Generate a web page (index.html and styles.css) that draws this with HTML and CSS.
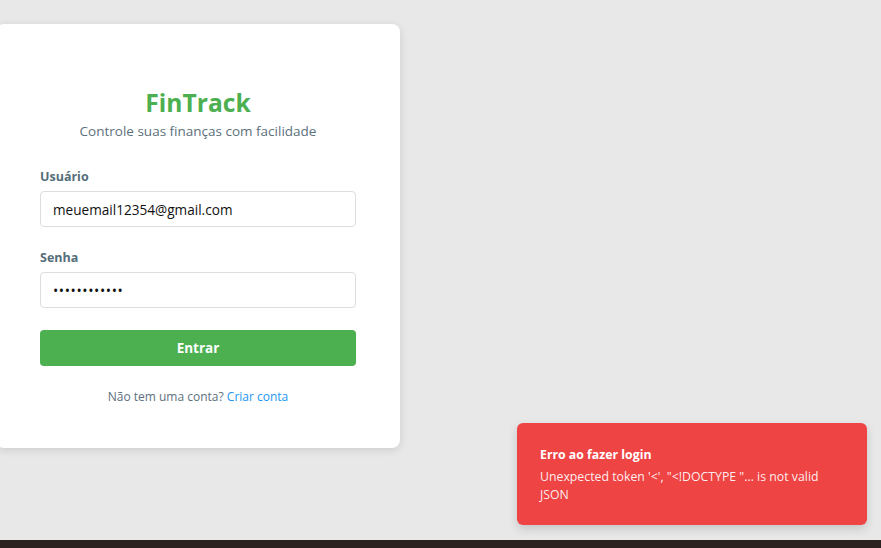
FILE: index.html
```html
<!DOCTYPE html>
<html lang="pt-BR">
<head>
<meta charset="utf-8">
<title>FinTrack - Login</title>
<link rel="stylesheet" href="styles.css">
</head>
<body>
<div class="screen">
  <main class="page">
    <section class="card">
      <h1 class="brand">FinTrack</h1>
      <p class="tagline">Controle suas finanças com facilidade</p>
      <form class="form">
        <label class="label" for="user">Usuário</label>
        <input class="input" id="user" type="text" value="meuemail12354@gmail.com">
        <label class="label label-gap" for="pass">Senha</label>
        <input class="input input-pass" id="pass" type="password" value="123456789012">
        <button class="btn" type="button">Entrar</button>
      </form>
      <p class="signup">Não tem uma conta? <a class="link" href="#">Criar conta</a></p>
    </section>
    <div class="toast">
      <div class="toast-title">Erro ao fazer login</div>
      <div class="toast-msg">Unexpected token '&lt;', "&lt;!DOCTYPE "... is not valid JSON</div>
    </div>
  </main>
  <footer class="taskbar"></footer>
</div>
</body>
</html>
```
FILE: styles.css
```css
* { box-sizing: border-box; }
html, body { margin: 0; padding: 0; }
body {
  font-family: "Open Sans", "Noto Sans", sans-serif;
  background: #e8e8e8;
  overflow: hidden;
}
.screen {
  height: 548px;
  display: flex;
  flex-direction: column;
}
.page {
  flex: 1;
  position: relative;
  padding-top: 24px;
}
.card {
  width: 404px;
  margin-left: -4px;
  background: #fff;
  border-radius: 8px;
  box-shadow: 0 2px 8px rgba(0,0,0,0.12);
  padding: 63px 44px 41px;
  text-align: center;
}
.brand {
  margin: 0;
  font-size: 24.6px;
  line-height: 32px;
  font-weight: 700;
  color: #4caf50;
}
.tagline {
  margin: 2px 0 0;
  font-size: 13.5px;
  line-height: 20px;
  color: #5c707c;
}
.form {
  margin-top: 26px;
  display: flex;
  flex-direction: column;
  text-align: left;
}
.label {
  font-size: 12.5px;
  line-height: 18px;
  font-weight: 700;
  color: #546e7a;
  padding-top: 1px;
  margin-bottom: 5px;
}
.label-gap { margin-top: 21px; }
.input {
  height: 36px;
  width: 100%;
  border: 1px solid #dddddd;
  border-radius: 4px;
  padding: 0 12px;
  font-family: inherit;
  font-size: 13.6px;
  color: #111;
  background: #fff;
  outline: none;
}
.input-pass {
  letter-spacing: 0.6px;
  font-size: 14px;
}
.btn {
  margin-top: 22px;
  height: 36px;
  border: none;
  border-radius: 4px;
  background: #4caf50;
  color: #fff;
  font-family: inherit;
  font-size: 13.5px;
  font-weight: 700;
  cursor: pointer;
}
.signup {
  margin: 21px 0 0;
  font-size: 12px;
  line-height: 20px;
  color: #5c707c;
}
.link {
  color: #2196f3;
  text-decoration: none;
}
.toast {
  position: absolute;
  right: 14px;
  bottom: 15px;
  width: 350px;
  background: #ef4444;
  color: #fff;
  border-radius: 6px;
  box-shadow: 0 4px 10px rgba(0,0,0,0.15);
  padding: 23px 30px 21px 23px;
}
.toast-title {
  font-size: 12.3px;
  line-height: 18px;
  font-weight: 700;
}
.toast-msg {
  margin-top: 4px;
  font-size: 12.3px;
  line-height: 18px;
  color: rgba(255,255,255,0.92);
}
.taskbar {
  height: 8px;
  background: #2b2220;
}
```
